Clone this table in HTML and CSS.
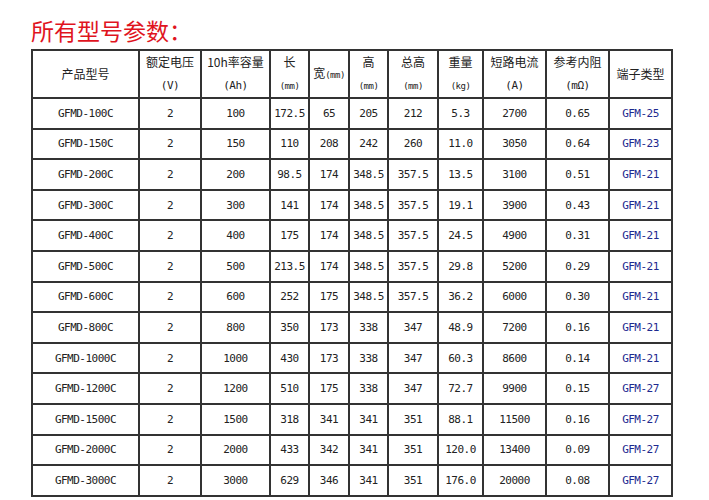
FILE: index.html
```html
<!DOCTYPE html>
<html lang="zh">
<head>
<meta charset="utf-8">
<title>所有型号参数</title>
<link rel="stylesheet" href="styles.css">
</head>
<body>
<div class="page">
  <h1 class="title">所有型号参数：</h1>
  <table class="spec">
    <colgroup>
      <col class="c-model"><col class="c-volt"><col class="c-cap"><col class="c-len"><col class="c-wid">
      <col class="c-hgt"><col class="c-tot"><col class="c-wt"><col class="c-sc"><col class="c-res"><col class="c-term">
    </colgroup>
    <thead>
      <tr>
        <th>产品型号</th>
        <th>额定电压<br><span class="u">(V)</span></th>
        <th>10h率容量<br><span class="u">(Ah)</span></th>
        <th>长<br><span class="u s">(mm)</span></th>
        <th class="one">宽<span class="u s">(mm)</span></th>
        <th>高<br><span class="u s">(mm)</span></th>
        <th>总高<br><span class="u s">(mm)</span></th>
        <th>重量<br><span class="u s">(kg)</span></th>
        <th>短路电流<br><span class="u">(A)</span></th>
        <th>参考内阻<br><span class="u">(mΩ)</span></th>
        <th>端子类型</th>
      </tr>
    </thead>
    <tbody>
      <tr><td>GFMD-100C</td><td>2</td><td>100</td><td>172.5</td><td>65</td><td>205</td><td>212</td><td>5.3</td><td>2700</td><td>0.65</td><td class="t">GFM-25</td></tr>
      <tr><td>GFMD-150C</td><td>2</td><td>150</td><td>110</td><td>208</td><td>242</td><td>260</td><td>11.0</td><td>3050</td><td>0.64</td><td class="t">GFM-23</td></tr>
      <tr><td>GFMD-200C</td><td>2</td><td>200</td><td>98.5</td><td>174</td><td>348.5</td><td>357.5</td><td>13.5</td><td>3100</td><td>0.51</td><td class="t">GFM-21</td></tr>
      <tr><td>GFMD-300C</td><td>2</td><td>300</td><td>141</td><td>174</td><td>348.5</td><td>357.5</td><td>19.1</td><td>3900</td><td>0.43</td><td class="t">GFM-21</td></tr>
      <tr><td>GFMD-400C</td><td>2</td><td>400</td><td>175</td><td>174</td><td>348.5</td><td>357.5</td><td>24.5</td><td>4900</td><td>0.31</td><td class="t">GFM-21</td></tr>
      <tr><td>GFMD-500C</td><td>2</td><td>500</td><td>213.5</td><td>174</td><td>348.5</td><td>357.5</td><td>29.8</td><td>5200</td><td>0.29</td><td class="t">GFM-21</td></tr>
      <tr><td>GFMD-600C</td><td>2</td><td>600</td><td>252</td><td>175</td><td>348.5</td><td>357.5</td><td>36.2</td><td>6000</td><td>0.30</td><td class="t">GFM-21</td></tr>
      <tr><td>GFMD-800C</td><td>2</td><td>800</td><td>350</td><td>173</td><td>338</td><td>347</td><td>48.9</td><td>7200</td><td>0.16</td><td class="t">GFM-21</td></tr>
      <tr><td>GFMD-1000C</td><td>2</td><td>1000</td><td>430</td><td>173</td><td>338</td><td>347</td><td>60.3</td><td>8600</td><td>0.14</td><td class="t">GFM-21</td></tr>
      <tr><td>GFMD-1200C</td><td>2</td><td>1200</td><td>510</td><td>175</td><td>338</td><td>347</td><td>72.7</td><td>9900</td><td>0.15</td><td class="t">GFM-27</td></tr>
      <tr><td>GFMD-1500C</td><td>2</td><td>1500</td><td>318</td><td>341</td><td>341</td><td>351</td><td>88.1</td><td>11500</td><td>0.16</td><td class="t">GFM-27</td></tr>
      <tr><td>GFMD-2000C</td><td>2</td><td>2000</td><td>433</td><td>342</td><td>341</td><td>351</td><td>120.0</td><td>13400</td><td>0.09</td><td class="t">GFM-27</td></tr>
      <tr><td>GFMD-3000C</td><td>2</td><td>3000</td><td>629</td><td>346</td><td>341</td><td>351</td><td>176.0</td><td>20000</td><td>0.08</td><td class="t">GFM-27</td></tr>
    </tbody>
  </table>
</div>
</body>
</html>
```
FILE: styles.css
```css
html, body {
  margin: 0;
  padding: 0;
  background: #fff;
}
.page {
  padding: 0 0 0 31px;
}
.title {
  margin: 0;
  height: 49px;
  padding-top: 16px;
  box-sizing: border-box;
  font-family: "Noto Sans CJK SC", sans-serif;
  font-weight: 400;
  font-size: 23px;
  line-height: 28px;
  color: #e0141e;
}
.spec {
  border-collapse: collapse;
  table-layout: fixed;
  width: 642px;
  font-family: "DejaVu Sans Mono", "Noto Sans CJK SC", monospace;
  font-size: 11px;
  color: #222;
}
.spec th, .spec td {
  border: 2px solid #333;
  padding: 0;
  text-align: center;
  vertical-align: middle;
}
.spec th {
  height: 45px;
  font-family: "Noto Sans CJK SC", sans-serif;
  font-weight: 400;
  font-size: 12px;
  line-height: 22px;
  color: #222;
}
.spec td {
  height: 28.6px;
  letter-spacing: -0.5px;
}
.spec .u {
  font-family: "DejaVu Sans Mono", monospace;
  font-size: 11px;
  letter-spacing: -0.5px;
}
.spec .u.s {
  font-size: 9px;
}
.spec .t {
  color: #1d2a8f;
}
.c-model { width: 107px; }
.c-volt { width: 62px; }
.c-cap { width: 69px; }
.c-len { width: 39px; }
.c-wid { width: 40px; }
.c-hgt { width: 39px; }
.c-tot { width: 50px; }
.c-wt { width: 45px; }
.c-sc { width: 63px; }
.c-res { width: 63px; }
.c-term { width: 63px; }
```
